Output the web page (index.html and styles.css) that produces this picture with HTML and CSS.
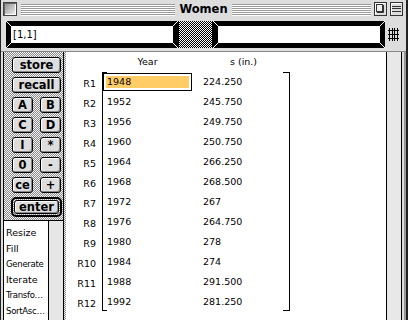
FILE: index.html
```html
<!DOCTYPE html>
<html>
<head>
<meta charset="utf-8">
<title>Women</title>
<link rel="stylesheet" href="styles.css">
</head>
<body>
<div class="window">
  <div class="titlebar">
    <div class="tb-left"><span class="closebox"></span><span class="stripes"></span></div>
    <div class="title">Women</div>
    <div class="tb-right">
      <span class="stripes"></span>
      <svg class="wbox" width="13" height="14" viewBox="0 0 13 14">
        <rect x="0.5" y="0.5" width="12" height="13" fill="#ddd" stroke="#333"/>
        <path d="M1.5 12.5V1.5H11.5" stroke="#fff" fill="none"/>
        <rect x="2.5" y="2.5" width="6" height="7" fill="#eee" stroke="#333"/>
        <path d="M9.5 3V10.5H3" stroke="#333" fill="none"/>
      </svg>
      <svg class="wbox" width="13" height="14" viewBox="0 0 13 14">
        <rect x="0.5" y="0.5" width="12" height="13" fill="#ddd" stroke="#333"/>
        <path d="M1.5 12.5V1.5H11.5" stroke="#fff" fill="none"/>
        <path d="M2 4.5H11M2 6.5H11M2 9.5H11" stroke="#333" fill="none"/>
      </svg>
    </div>
  </div>

  <div class="toolbar">
    <div class="entry"><div class="entry-in">[1,1]</div></div>
    <div class="swatch"></div>
    <div class="entry"><div class="entry-in"></div></div>
    <svg class="gridicon" width="11" height="13" viewBox="0 0 11 13">
      <path d="M0 2.5H11M0 6.5H11M0 10.5H11M1.5 0V13M4.5 0V13M6.5 0V13M9.5 0V13" stroke="#000" fill="none"/>
    </svg>
  </div>

  <div class="content">
    <div class="gutter-l"></div>
    <div class="sidebar">
      <div class="keypad">
        <div class="key wide">store</div>
        <div class="key wide">recall</div>
        <div class="pair"><div class="key">A</div><div class="key">B</div></div>
        <div class="pair"><div class="key">C</div><div class="key">D</div></div>
        <div class="pair"><div class="key">I</div><div class="key">*</div></div>
        <div class="pair"><div class="key">0</div><div class="key">-</div></div>
        <div class="pair"><div class="key">ce</div><div class="key">+</div></div>
        <div class="default"><div class="key">enter</div></div>
      </div>
      <div class="list">
        <ul class="items">
          <li>Resize</li>
          <li>Fill</li>
          <li class="cond">Generate</li>
          <li>Iterate</li>
          <li class="cond">Transfo…</li>
          <li class="cond">SortAsc…</li>
        </ul>
        <div class="lscroll"></div>
      </div>
    </div>
    <div class="strip"></div>
    <div class="main">
      <div class="heads"><span>Year</span><span>s (in.)</span></div>
      <div class="sheet">
        <div class="labels">
          <div>R1</div><div>R2</div><div>R3</div><div>R4</div><div>R5</div><div>R6</div>
          <div>R7</div><div>R8</div><div>R9</div><div>R10</div><div>R11</div><div>R12</div>
        </div>
        <div class="matrix">
          <div class="mrow"><span class="cell sel">1948</span><span class="cell">224.250</span></div>
          <div class="mrow"><span class="cell">1952</span><span class="cell">245.750</span></div>
          <div class="mrow"><span class="cell">1956</span><span class="cell">249.750</span></div>
          <div class="mrow"><span class="cell">1960</span><span class="cell">250.750</span></div>
          <div class="mrow"><span class="cell">1964</span><span class="cell">266.250</span></div>
          <div class="mrow"><span class="cell">1968</span><span class="cell">268.500</span></div>
          <div class="mrow"><span class="cell">1972</span><span class="cell">267</span></div>
          <div class="mrow"><span class="cell">1976</span><span class="cell">264.750</span></div>
          <div class="mrow"><span class="cell">1980</span><span class="cell">278</span></div>
          <div class="mrow"><span class="cell">1984</span><span class="cell">274</span></div>
          <div class="mrow"><span class="cell">1988</span><span class="cell">291.500</span></div>
          <div class="mrow"><span class="cell">1992</span><span class="cell">281.250</span></div>
        </div>
      </div>
    </div>
    <div class="vscroll"></div>
    <div class="gutter-r"></div>
  </div>
</div>
</body>
</html>
```

FILE: styles.css
```css
* { box-sizing: border-box; margin: 0; padding: 0; }
html, body { width: 408px; height: 320px; overflow: hidden; }
body { background: #ddd; font-family: "DejaVu Sans", "Noto Sans", sans-serif; color: #000; }

.window {
  width: 408px; height: 320px;
  display: flex; flex-direction: column;
  border-left: 1px solid #222; border-right: 2px solid #222;
  background: #ddd;
}

/* title bar */
.titlebar {
  height: 18px; flex: none;
  display: grid; grid-template-columns: 1fr auto 1fr; align-items: center;
}
.tb-left { display: flex; align-items: center; gap: 4px; padding-left: 2px; }
.tb-right { display: flex; align-items: center; gap: 3px; padding-right: 3px; }
.closebox {
  flex: none; width: 14px; height: 14px;
  border: 1px solid #444;
  background: linear-gradient(135deg, #8a8a8a, #f4f4f4);
  box-shadow: inset 1px 1px #666, inset -1px -1px #fff;
}
.stripes {
  flex: 1; height: 12px; margin-top: 1px;
  background: repeating-linear-gradient(#999 0 1px, #fff 1px 2px);
}
.wbox { flex: none; display: block; }
.title {
  padding: 0 4px;
  font: bold 11.5px/18px "DejaVu Sans", sans-serif;
}

/* entry row */
.toolbar {
  height: 34px; flex: none;
  display: flex; align-items: flex-start;
  padding: 3px 0 0 5px;
  border-bottom: 1px solid #888;
}
.entry {
  width: 172px; height: 27px; padding: 5px;
  background:
    linear-gradient(to top right, transparent calc(50% - .7px), #fff 50%, transparent calc(50% + .7px)) left top / 5px 5px no-repeat,
    linear-gradient(to top right, transparent calc(50% - .7px), #fff 50%, transparent calc(50% + .7px)) right bottom / 5px 5px no-repeat,
    linear-gradient(to bottom right, transparent calc(50% - .7px), #fff 50%, transparent calc(50% + .7px)) right top / 5px 5px no-repeat,
    linear-gradient(to bottom right, transparent calc(50% - .7px), #fff 50%, transparent calc(50% + .7px)) left bottom / 5px 5px no-repeat,
    #000;
}
.entry-in {
  height: 17px; background: #fff;
  padding-left: 2px;
  font-size: 10px; line-height: 17px;
}
.swatch {
  width: 35px; height: 27px;
  border-left: 1px solid #000; border-right: 1px solid #000;
  background: repeating-conic-gradient(#000 0 25%, #fff 0 50%) 0 0 / 2px 2px;
}
.gridicon { display: block; margin: 7px 0 0 3px; }

/* content */
.content { flex: 1; display: flex; min-height: 0; }
.gutter-l { width: 2px; background: #ddd; }
.sidebar {
  width: 61px; flex: none;
  display: flex; flex-direction: column;
  border-left: 1px solid #000; border-right: 1px solid #000;
}
.keypad {
  height: 168px; flex: none;
  display: flex; flex-direction: column; gap: 4px;
  padding: 5px 0 0 8px;
  background: repeating-conic-gradient(#8c8c8c 0 25%, #f2f2f2 0 50%) 0 0 / 2px 2px;
}
.pair { display: flex; gap: 7px; }
.key {
  width: 21px; height: 16px;
  border: 1px solid #000; border-radius: 3px;
  background: #ddd;
  box-shadow: inset 1px 1px #fff, inset -1px -1px #888;
  font: bold 11.5px/14px "DejaVu Sans", sans-serif;
  text-align: center;
}
.wide { width: 49px; }
.default {
  width: 51px; height: 20px; margin-left: -1px;
  border: 2px solid #000; border-radius: 5px;
  padding: 1px;
}
.default .key { width: 100%; height: 14px; line-height: 12px; }

.list { flex: 1; display: flex; border-top: 1px solid #000; min-height: 0; }
.items {
  width: 45px; flex: none; list-style: none;
  background: #fff; border-right: 1px solid #000;
  padding: 4px 0 0 2px;
  font-size: 9.5px; line-height: 15.5px; white-space: nowrap; overflow: hidden;
}
.items .cond {
  font-family: "DejaVu Sans Condensed", "DejaVu Sans", sans-serif;
  font-stretch: condensed; letter-spacing: -0.3px;
}
.lscroll { flex: 1; background: #e6e6e6; }

.strip {
  width: 2px; flex: none;
  background: repeating-conic-gradient(#8c8c8c 0 25%, #f2f2f2 0 50%) 0 0 / 2px 2px;
}

/* sheet */
.main {
  width: 320px; flex: none; background: #fff;
  font-size: 9.5px;
}
.heads {
  display: grid; grid-template-columns: 89px 89px; column-gap: 7px;
  padding-left: 37px; height: 20px; line-height: 20px; text-align: center;
}
.sheet { display: flex; }
.labels { width: 30px; padding-top: 2px; text-align: right; }
.labels div { height: 20px; line-height: 20px; }
.matrix {
  margin-left: 6px; width: 188px; height: 239px; padding-right: 1px;
  border-left: 1px solid #000; border-right: 1px solid #000;
  background:
    linear-gradient(#000, #000) left top / 4px 1px no-repeat,
    linear-gradient(#000, #000) left bottom / 4px 1px no-repeat,
    linear-gradient(#000, #000) right top / 6px 1px no-repeat,
    linear-gradient(#000, #000) right bottom / 6px 1px no-repeat;
}
.mrow {
  display: grid; grid-template-columns: 89px 89px; column-gap: 7px;
  height: 20px; padding-top: 1px;
}
.cell {
  height: 18px; border: 1px solid transparent;
  padding-left: 3px; line-height: 16px; white-space: nowrap;
}
.cell.sel {
  border-color: #000; background: #ffcc66;
  box-shadow: inset 0 0 0 2px #fff;
}

.vscroll {
  width: 16px; flex: none;
  border-left: 1px solid #000; border-right: 1px solid #000;
  background: #e8e8e8;
}
.gutter-r { width: 4px; flex: none; background: linear-gradient(to right, #ddd 2px, #999 2px); }
```
